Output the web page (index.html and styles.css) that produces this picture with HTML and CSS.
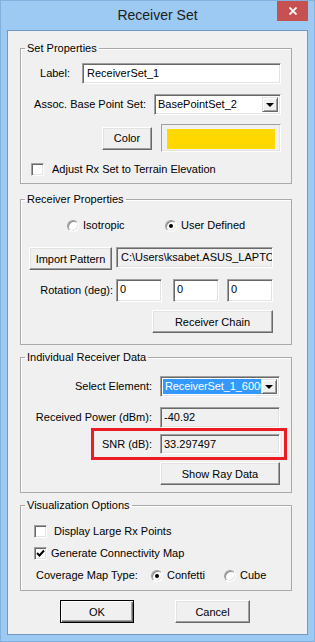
FILE: index.html
```html
<!DOCTYPE html>
<html lang="en">
<head>
    <meta charset="UTF-8">
    <meta name="viewport" content="width=device-width, initial-scale=1.0">
    <title>Receiver Set</title>
    <link rel="stylesheet" href="styles.css">
</head>
<body>
    <div class="window">
        <div class="titlebar">
            <span></span>
            <div class="title">Receiver Set</div>
            <div class="close">
                <svg width="8" height="8" viewBox="0 0 8 8"><path d="M0.5 0.5 L7.5 7.5 M7.5 0.5 L0.5 7.5" stroke="#fff" stroke-width="1.8"/></svg>
            </div>
        </div>

        <div class="client">
            <fieldset class="group group-set">
                <legend>Set Properties</legend>
                <div class="group-body set-body">
                    <div class="row row-end set-label">
                        <label>Label:</label>
                        <div class="field w-label">ReceiverSet_1</div>
                    </div>
                    <div class="row row-end set-base">
                        <label>Assoc. Base Point Set:</label>
                        <div class="combo w-base">
                            <span class="combo-text">BasePointSet_2</span>
                            <span class="combo-btn"><i class="arrow"></i></span>
                        </div>
                    </div>
                    <div class="row row-end set-color">
                        <button class="btn w-color">Color</button>
                        <div class="swatch"><div class="swatch-fill"></div></div>
                    </div>
                    <div class="row set-adjust">
                        <span class="check"></span>
                        <span class="check-text">Adjust Rx Set to Terrain Elevation</span>
                    </div>
                </div>
            </fieldset>

            <fieldset class="group group-rx">
                <legend>Receiver Properties</legend>
                <div class="group-body rx-body">
                    <div class="row rx-radios">
                        <span class="option opt-iso"><span class="radio"></span><span class="option-text">Isotropic</span></span>
                        <span class="option"><span class="radio on"></span><span class="option-text">User Defined</span></span>
                    </div>
                    <div class="row rx-import">
                        <button class="btn w-import">Import Pattern</button>
                        <div class="field readonly w-path">C:\Users\ksabet.ASUS_LAPTO</div>
                    </div>
                    <div class="row row-end rx-rotation">
                        <label>Rotation (deg):</label>
                        <div class="field w-rot rot-1">0</div>
                        <div class="field w-rot rot-2">0</div>
                        <div class="field w-rot">0</div>
                    </div>
                    <div class="row row-end rx-chain">
                        <button class="btn w-chain">Receiver Chain</button>
                    </div>
                </div>
            </fieldset>

            <fieldset class="group group-data">
                <legend>Individual Receiver Data</legend>
                <div class="group-body data-body">
                    <div class="row row-end data-select">
                        <label>Select Element:</label>
                        <div class="combo w-data">
                            <span class="combo-text"><span class="selected">ReceiverSet_1_6000</span></span>
                            <span class="combo-btn"><i class="arrow"></i></span>
                        </div>
                    </div>
                    <div class="row row-end data-power">
                        <label>Received Power (dBm):</label>
                        <div class="field readonly w-data">-40.92</div>
                    </div>
                    <div class="row row-end snr-mark">
                        <label>SNR (dB):</label>
                        <div class="field readonly w-data snr-field">33.297497</div>
                    </div>
                    <div class="row row-end data-ray">
                        <button class="btn w-data">Show Ray Data</button>
                    </div>
                </div>
            </fieldset>

            <fieldset class="group group-vis">
                <legend>Visualization Options</legend>
                <div class="group-body vis-body">
                    <div class="row vis-large">
                        <span class="check"></span>
                        <span class="check-text">Display Large Rx Points</span>
                    </div>
                    <div class="row vis-conn">
                        <span class="check">
                            <svg width="9" height="9" viewBox="0 0 9 9"><path d="M1 4 L3.5 6.5 L8 1.5" fill="none" stroke="#000" stroke-width="2"/></svg>
                        </span>
                        <span class="check-text">Generate Connectivity Map</span>
                    </div>
                    <div class="row vis-type">
                        <span class="type-label">Coverage Map Type:</span>
                        <span class="option opt-confetti"><span class="radio on"></span><span class="option-text">Confetti</span></span>
                        <span class="option"><span class="radio"></span><span class="option-text">Cube</span></span>
                    </div>
                </div>
            </fieldset>

            <div class="actions">
                <button class="btn default w-ok">OK</button>
                <button class="btn w-cancel">Cancel</button>
            </div>
        </div>
    </div>
</body>
</html>
```

FILE: styles.css
```css
* {
    box-sizing: border-box;
}

body {
    margin: 0;
    font-family: "Liberation Sans", Arial, sans-serif;
    font-size: 11px;
    color: #000;
    background: #ffffff;
}

/* window frame */
.window {
    width: 315px;
    height: 642px;
    background: #9ccaf2;
    border: 1px solid #82b1df;
    padding: 0 6px 6px;
    display: flex;
    flex-direction: column;
}

.titlebar {
    height: 29px;
    display: grid;
    grid-template-columns: 1fr auto 1fr;
}

.title {
    font-size: 14px;
    line-height: 29px;
    color: #202020;
}

.close {
    justify-self: end;
    width: 31px;
    height: 20px;
    background: #c75050;
    display: flex;
    align-items: center;
    justify-content: center;
}

.client {
    flex: 1;
    background: #f0f0f0;
    border: 1px solid #6f98c3;
    padding: 11px 0 0 12px;
}

/* group boxes */
.group {
    margin: 0;
    padding: 0;
    min-width: 0;
    width: 272px;
    border: 1px solid #a9a9a9;
    box-shadow: inset 1px 1px #fff;
}

.group legend {
    margin-left: 4px;
    padding: 0 2px;
    line-height: 13px;
}

.group-set { height: 142px; }
.group-rx { height: 152px; margin-top: 9px; }
.group-data { height: 142px; margin-top: 6px; }
.group-vis { height: 92px; margin-top: 6px; }

.group-body {
    display: flex;
    flex-direction: column;
}

.set-body { padding: 0 10px; }
.rx-body { padding: 0 18px 0 8px; }
.data-body { padding: 0 11px; }
.vis-body { padding: 0 13px; }

.row {
    display: flex;
    align-items: center;
}

.row-end {
    justify-content: flex-end;
}

label, .check-text, .option-text, .type-label {
    line-height: 13px;
    white-space: nowrap;
}

/* edit boxes */
.field {
    height: 21px;
    background: #fff;
    border: 1px solid;
    border-color: #a0a0a0 #fff #fff #a0a0a0;
    box-shadow: inset 1px 1px #696969, inset -1px -1px #e3e3e3;
    padding: 0 0 1px 3px;
    display: flex;
    align-items: center;
    white-space: nowrap;
    overflow: hidden;
}

.field.readonly {
    background: #f0f0f0;
}

.combo {
    height: 21px;
    display: flex;
    background: #fff;
    border: 1px solid;
    border-color: #a0a0a0 #fff #fff #a0a0a0;
    box-shadow: inset 1px 1px #696969, inset -1px -1px #e3e3e3;
    padding: 2px;
}

.combo-text {
    flex: 1;
    min-width: 0;
    overflow: hidden;
    white-space: nowrap;
    padding-left: 1px;
    line-height: 15px;
}

.combo-text .selected {
    display: block;
    background: #3399ff;
    color: #fff;
    padding-left: 2px;
    margin-left: -1px;
    letter-spacing: -0.1px;
}

.combo-btn {
    width: 16px;
    flex: none;
    background: #f0f0f0;
    border: 1px solid;
    border-color: #e3e3e3 #696969 #696969 #e3e3e3;
    box-shadow: inset 1px 1px #fff, inset -1px -1px #a0a0a0;
    display: flex;
    align-items: center;
    justify-content: center;
}

.arrow {
    width: 0;
    height: 0;
    border-left: 4px solid transparent;
    border-right: 4px solid transparent;
    border-top: 4px solid #000;
}

/* buttons */
.btn {
    height: 23px;
    font: inherit;
    color: #000;
    background: #f0f0f0;
    border: 1px solid;
    border-color: #fff #696969 #696969 #fff;
    box-shadow: inset -1px -1px #a0a0a0, inset 1px 1px #e3e3e3;
    padding: 0;
}

.btn.default {
    border-color: #000;
    box-shadow: inset 1px 1px #fff, inset -1px -1px #696969, inset -2px -2px #a0a0a0;
}

/* check boxes and radios */
.check {
    width: 13px;
    height: 13px;
    flex: none;
    background: #fff;
    border: 1px solid;
    border-color: #a0a0a0 #fff #fff #a0a0a0;
    box-shadow: inset 1px 1px #696969, inset -1px -1px #e3e3e3;
    display: flex;
    align-items: center;
    justify-content: center;
}

.option {
    display: flex;
    align-items: center;
}

.radio {
    width: 12px;
    height: 12px;
    flex: none;
    border-radius: 50%;
    background: #fff;
    border: 1px solid;
    border-color: #a0a0a0 #fff #fff #a0a0a0;
    box-shadow: inset 1px 1px #8a8a8a, inset -1px -1px #e3e3e3;
    display: flex;
    align-items: center;
    justify-content: center;
}

.radio.on::after {
    content: "";
    width: 4px;
    height: 4px;
    border-radius: 50%;
    background: #000;
}

.option-text {
    margin-left: 4px;
}

/* Set Properties */
.set-label { margin-top: 8px; height: 21px; }
.set-label label { margin-right: 12px; }
.w-label { width: 199px; padding-left: 4px; }

.set-base { margin-top: 10px; height: 21px; }
.set-base label { margin-right: 8px; }
.w-base { width: 127px; }

.set-color { margin-top: 9px; height: 28px; }
.w-color { width: 50px; margin-right: 9px; }

.swatch {
    width: 120px;
    height: 28px;
    border: 1px solid;
    border-color: #a0a0a0 #fff #fff #a0a0a0;
    box-shadow: inset -1px -1px #e3e3e3;
    padding: 4px 5px 3px 5px;
}

.swatch-fill {
    height: 20px;
    background: #ffd800;
}

.set-adjust { margin-top: 11px; height: 13px; }
.set-adjust .check-text { margin-left: 8px; }

/* Receiver Properties */
.rx-radios { margin-top: 13px; height: 13px; }
.opt-iso { width: 98px; margin-left: 38px; }

.rx-import { margin-top: 15px; height: 23px; align-items: flex-start; }
.w-import { width: 83px; }
.w-path { width: 157px; margin-left: 4px; padding-left: 4px; }

.rx-rotation { margin-top: 9px; height: 23px; }
.rx-rotation label { margin-right: 3px; }
.w-rot { width: 46px; height: 23px; padding-bottom: 3px; }
.rot-1 { margin-right: 11px; }
.rot-2 { margin-right: 8px; }

.rx-chain { margin-top: 8px; }
.w-chain { width: 121px; }

/* Individual Receiver Data */
.data-body label { margin-right: 8px; }
.w-data { width: 120px; }

.data-select { margin-top: 12px; height: 21px; }
.data-power { margin-top: 10px; height: 21px; }

.snr-mark {
    align-self: flex-end;
    width: 196px;
    height: 32px;
    margin-right: -7px;
    border: 3px solid #ed1c24;
    padding: 0 4px 0 0;
}

.snr-field { height: 20px; }

.data-ray { margin-top: 2px; }

/* Visualization Options */
.vis-large { margin-top: 13px; height: 13px; }
.vis-large .check-text { margin-left: 7px; }

.vis-conn { margin-top: 9px; height: 13px; }
.vis-conn .check-text { margin-left: 4px; }

.vis-type { margin-top: 9px; height: 13px; margin-left: 2px; }
.type-label { width: 115px; }
.opt-confetti { width: 73px; }

/* dialog buttons */
.actions {
    display: flex;
    margin: 9px 0 0 40px;
}

.w-ok { width: 74px; }
.w-cancel { width: 75px; margin-left: 41px; }
```
